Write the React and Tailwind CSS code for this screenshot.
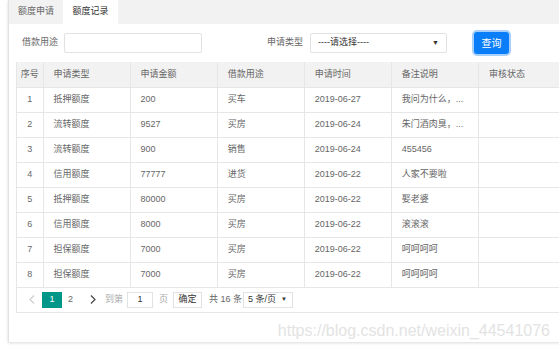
import React from 'react';

const rows = [
  [1, '抵押额度', '200', '买车', '2019-06-27', '我问为什么，...'],
  [2, '流转额度', '9527', '买房', '2019-06-24', '朱门酒肉臭，...'],
  [3, '流转额度', '900', '销售', '2019-06-24', '455456'],
  [4, '信用额度', '77777', '进货', '2019-06-22', '人家不要啦'],
  [5, '抵押额度', '80000', '买房', '2019-06-22', '娶老婆'],
  [6, '信用额度', '8000', '买房', '2019-06-22', '滚滚滚'],
  [7, '担保额度', '7000', '买房', '2019-06-22', '呵呵呵呵'],
  [8, '担保额度', '7000', '买房', '2019-06-22', '呵呵呵呵'],
];

const heads = ['申请类型', '申请金额', '借款用途', '申请时间', '备注说明', '审核状态'];

const Chevron = ({ left, color }) => (
  <svg width="6" height="9" viewBox="0 0 6 9" fill="none" stroke={color} strokeWidth="1.2">
    <path d={left ? 'M5 0.5 L1 4.5 L5 8.5' : 'M1 0.5 L5 4.5 L1 8.5'} />
  </svg>
);

export default function App() {
  return (
    <div
      className="w-[559px] h-[348px] overflow-hidden bg-white text-[9px] text-[#666]"
      style={{ fontFamily: '"Liberation Sans", "Noto Sans CJK SC", sans-serif' }}
    >
      <div className="ml-[8px] w-[570px] h-[342px] bg-white border-l border-[#e2e2e2] shadow-[0_1px_3px_rgba(0,0,0,0.15)]">
        {/* Tabs */}
        <div className="flex h-[24px] bg-[#f2f2f2]">
          <div className="w-[54px] flex items-center justify-center text-[#666]">额度申请</div>
          <div className="w-[55px] flex items-center justify-center bg-white text-[#333]">额度记录</div>
        </div>

        {/* Search form */}
        <div className="flex items-center h-[38px] pl-[13px]">
          <span className="w-[42px]">借款用途</span>
          <div className="w-[138px] h-[20px] border border-[#e2e2e2] rounded-[2px]" />
          <span className="ml-[65px] w-[43px]">申请类型</span>
          <div className="w-[137px] h-[20px] border border-[#e2e2e2] rounded-[2px] flex items-center justify-between px-[7px] text-[#333]">
            <span>----请选择----</span>
            <span className="text-[7px]">▼</span>
          </div>
          <button className="ml-[27px] w-[35px] h-[22px] rounded-[3px] bg-[#0a7ef9] text-white text-[10px] ring-2 ring-[#a9d0fb]">
            查询
          </button>
        </div>

        {/* Table */}
        <div className="ml-[7px] w-[560px] border-l border-[#e6e6e6]">
          <table className="border-collapse table-fixed w-[549px]">
            <colgroup>
              <col className="w-[26px]" />
              {heads.map((h) => (
                <col key={h} className="w-[87px]" />
              ))}
            </colgroup>
            <thead>
              <tr className="h-[25px] bg-[#f2f2f2]">
                <th className="font-normal text-center border-r border-b border-[#e6e6e6]">序号</th>
                {heads.map((h) => (
                  <th key={h} className="font-normal text-left pl-[10px] border-r border-b border-[#e6e6e6]">
                    {h}
                  </th>
                ))}
              </tr>
            </thead>
            <tbody>
              {rows.map((r) => (
                <tr key={r[0]} className="h-[25px]">
                  <td className="text-center border-r border-b border-[#e6e6e6]">{r[0]}</td>
                  {r.slice(1).map((c, i) => (
                    <td key={i} className="pl-[10px] border-r border-b border-[#e6e6e6] whitespace-nowrap">
                      {c}
                    </td>
                  ))}
                  <td className="border-r border-b border-[#e6e6e6]" />
                </tr>
              ))}
            </tbody>
          </table>

          {/* Pagination */}
          <div className="flex items-center h-[25px] border-b border-[#e6e6e6] pl-[9px]">
            <span className="w-[16px] flex items-center pl-[3px]">
              <Chevron left color="#cfcfcf" />
            </span>
            <span className="w-[20px] h-[16px] flex items-center justify-center bg-[#009688] text-white">1</span>
            <span className="w-[17px] text-center">2</span>
            <span className="w-[26px] flex items-center pl-[11px]">
              <Chevron color="#444" />
            </span>
            <span className="w-[18px] text-[#aaa]">到第</span>
            <div className="ml-[4px] w-[26px] h-[16px] border border-[#e2e2e2] flex items-center justify-center text-[#333]">1</div>
            <span className="ml-[6px] text-[#aaa]">页</span>
            <div className="ml-[5px] w-[29px] h-[16px] border border-[#e2e2e2] flex items-center justify-center text-[#333]">确定</div>
            <span className="ml-[7px] w-[34px]">共 16 条</span>
            <div className="w-[50px] h-[16px] border border-[#e2e2e2] flex items-center justify-between pl-[4px] pr-[5px] text-[#333]">
              <span>5 条/页</span>
              <span className="text-[6px]">▼</span>
            </div>
          </div>
        </div>

        <div className="flex justify-end pr-[28px] pt-[10px] text-[#e3e3e3] text-[16px] leading-none">
          https://blog.csdn.net/weixin_44541076
        </div>
      </div>
    </div>
  );
}
